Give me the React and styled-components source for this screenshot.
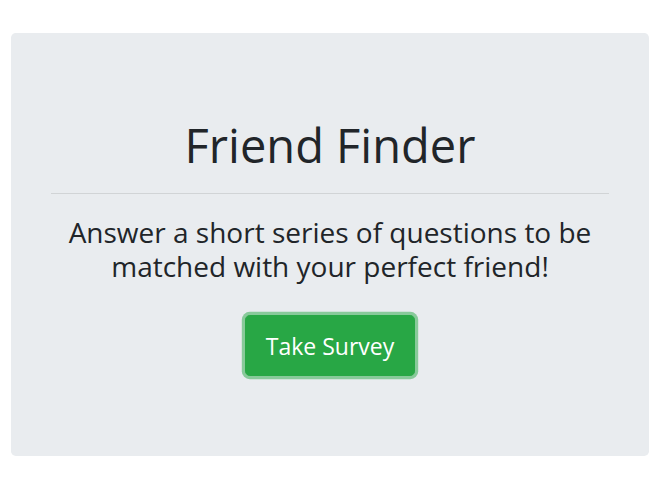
import React from 'react'
import styled, { createGlobalStyle } from 'styled-components'

const GlobalStyle = createGlobalStyle`
    body {
        margin: 0;
        background: #fff;
        font-family: "Open Sans", "Noto Sans", "Liberation Sans", sans-serif;
        color: #212529;
    }
`

const Page = styled.div`
    padding: 33px 12px 30px 11px;
`

const Jumbotron = styled.div`
    background: #e9ecef;
    border-radius: 4.8px;
    padding: 64px 40px;
    text-align: center;
`

const Title = styled.h1`
    margin: 0;
    padding-top: 20px;
    font-size: 47px;
    font-weight: 400;
    line-height: 1.2;
`

const Divider = styled.hr`
    margin: 20px 0 21px;
    border: 0;
    border-top: 1px solid rgba(0, 0, 0, 0.1);
`

const Lead = styled.h3`
    margin: 0;
    font-size: 28px;
    font-weight: 400;
    line-height: 34px;
`

const ButtonRow = styled.div`
    display: flex;
    justify-content: center;
    margin: 32px 0 16px;
`

const Button = styled.a`
    display: inline-block;
    padding: 11.5px 20px;
    font-size: 23px;
    line-height: 36px;
    color: #fff;
    background: #28a745;
    border: 1px solid #28a745;
    border-radius: 4.8px;
    text-decoration: none;
    box-shadow: ${props => props.focused ? '0 0 0 3.2px rgba(40, 167, 69, 0.5)' : 'none'};
    cursor: pointer;
`

const App = () => {
    return (
        <Page>
            <GlobalStyle />
            <Jumbotron>
                <Title>Friend Finder</Title>
                <Divider />
                <Lead>Answer a short series of questions to be matched with your perfect friend!</Lead>
                <ButtonRow>
                    <Button focused href="#survey">Take Survey</Button>
                </ButtonRow>
            </Jumbotron>
        </Page>
    )
}

export default App
